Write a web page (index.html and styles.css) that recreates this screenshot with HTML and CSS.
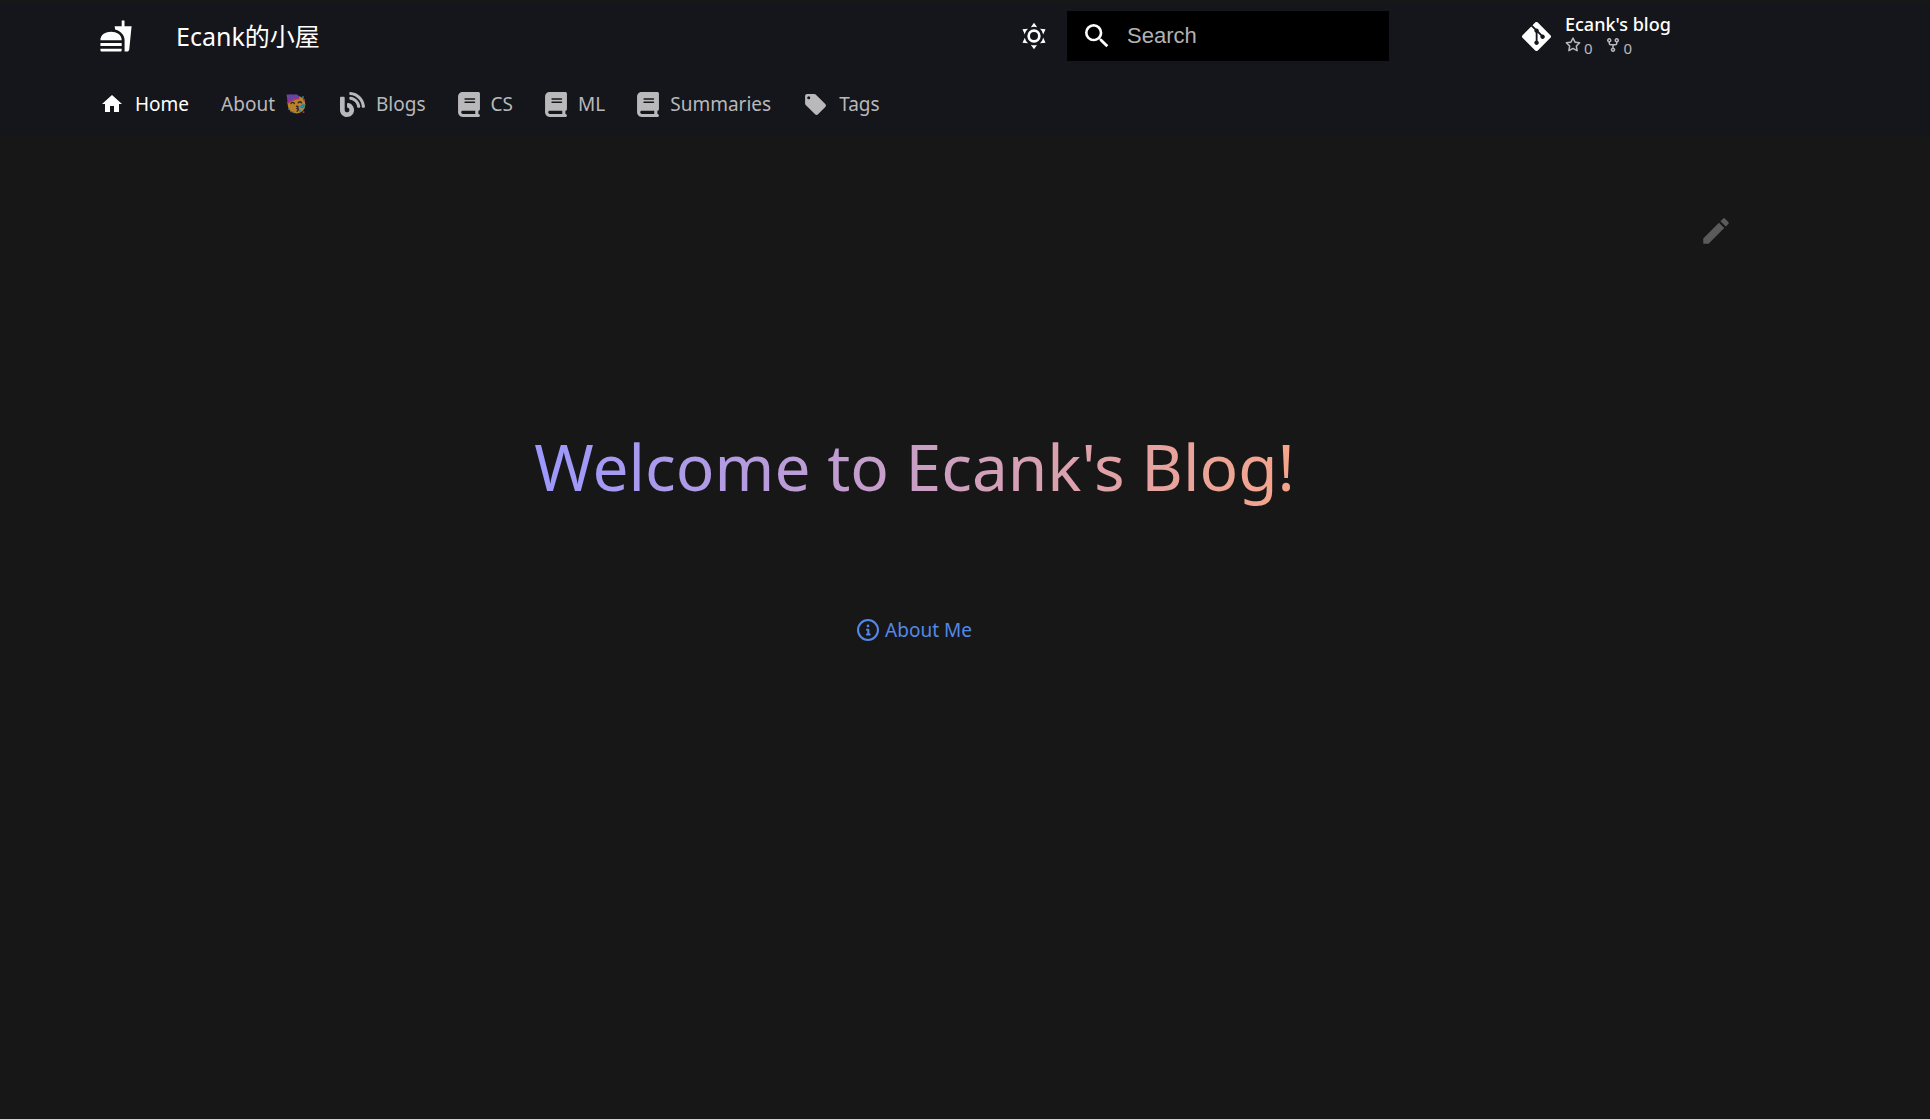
FILE: index.html
```html
<!DOCTYPE html>
<html lang="en">
<head>
<meta charset="utf-8">
<meta name="viewport" content="width=device-width, initial-scale=1">
<title>Ecank的小屋</title>
<link rel="stylesheet" href="styles.css">
</head>
<body>
<svg width="0" height="0" hidden>
  <symbol id="book" viewBox="0 0 448 512"><path d="M96 0C43 0 0 43 0 96v320c0 53 43 96 96 96h320c17.7 0 32-14.3 32-32s-14.3-32-32-32v-64c17.7 0 32-14.3 32-32V32c0-17.7-14.3-32-32-32zm0 384h256v64H96c-17.7 0-32-14.3-32-32s14.3-32 32-32m32-240c0-8.8 7.2-16 16-16h192c8.8 0 16 7.2 16 16s-7.2 16-16 16H144c-8.8 0-16-7.2-16-16m16 48h192c8.8 0 16 7.2 16 16s-7.2 16-16 16H144c-8.8 0-16-7.2-16-16s7.2-16 16-16"/></symbol>
</svg>
<header class="header">
  <div class="header-row">
    <a class="logo" href="#" aria-label="Ecank的小屋"><svg class="icon-34" viewBox="0 0 24 24"><path d="M18.06 22.99h1.66c.84 0 1.53-.64 1.63-1.46L23 5.05h-5V1h-1.97v4.05h-4.97l.3 2.34c1.71.47 3.31 1.32 4.27 2.26 1.44 1.42 2.43 2.89 2.43 5.29v8.05zM1 21.99V21h15.03v.99c0 .55-.45 1-1.01 1H2.01c-.56 0-1.01-.45-1.01-1zm15.03-7c0-8-15.03-8-15.03 0h15.03zM1.02 17h15v2h-15z"/></svg></a>
    <span class="site-title">Ecank的小屋</span>
    <button class="palette" type="button" aria-label="Switch color scheme"><svg class="icon-32" viewBox="0 0 24 24"><path d="M12 7a5 5 0 0 1 5 5 5 5 0 0 1-5 5 5 5 0 0 1-5-5 5 5 0 0 1 5-5m0 2a3 3 0 0 0-3 3 3 3 0 0 0 3 3 3 3 0 0 0 3-3 3 3 0 0 0-3-3m0-7 2.39 3.42C13.65 5.15 12.84 5 12 5s-1.65.15-2.39.42zM3.34 7l4.16-.35A7.2 7.2 0 0 0 5.94 8.5c-.44.74-.69 1.5-.83 2.29zm.02 10 1.76-3.77a7.131 7.131 0 0 0 2.38 4.14zM20.65 7l-1.77 3.79a7.02 7.02 0 0 0-2.38-4.15zm-.01 10-4.14.36c.59-.51 1.12-1.14 1.54-1.86.42-.73.69-1.5.83-2.29zM12 22l-2.41-3.44c.74.27 1.55.44 2.41.44.82 0 1.63-.17 2.37-.44z"/></svg></button>
    <form class="search" role="search">
      <label for="q" aria-label="Search"><svg class="icon-32" viewBox="0 0 24 24"><path d="M9.5 3A6.5 6.5 0 0 1 16 9.5c0 1.61-.59 3.09-1.56 4.23l.27.27h.79l5 5-1.5 1.5-5-5v-.79l-.27-.27A6.516 6.516 0 0 1 9.5 16 6.5 6.5 0 0 1 3 9.5 6.5 6.5 0 0 1 9.5 3m0 2C7 5 5 7 5 9.5S7 14 9.5 14 14 12 14 9.5 12 5 9.5 5z"/></svg></label>
      <input id="q" type="text" placeholder="Search">
    </form>
    <a class="repo" href="#">
      <svg class="repo-icon" viewBox="0 32 448 448"><path d="M439.55 236.05 244 40.45a28.87 28.87 0 0 0-40.81 0l-40.66 40.63 51.52 51.52c27.06-9.14 52.68 16.77 43.39 43.68l49.66 49.66c34.23-11.8 61.18 31 35.47 56.69-26.49 26.49-70.21-2.87-56-37.34L240.22 199v121.85c25.3 12.54 22.26 41.85 9.08 55a34.34 34.34 0 0 1-48.55 0c-17.57-17.6-11.07-46.91 11.25-56v-123c-20.8-8.51-24.6-30.74-18.64-45L142.57 101 8.45 235.14a28.86 28.86 0 0 0 0 40.81l195.61 195.6a28.86 28.86 0 0 0 40.8 0l194.69-194.69a28.86 28.86 0 0 0 0-40.81z"/></svg>
      <span class="repo-text">
        <span class="repo-name">Ecank's blog</span>
        <span class="facts">
          <span class="fact"><svg viewBox="0 0 16 16"><path d="M8 .25a.75.75 0 0 1 .673.418l1.882 3.815 4.21.612a.75.75 0 0 1 .416 1.279l-3.046 2.97.719 4.192a.751.751 0 0 1-1.088.791L8 12.347l-3.766 1.98a.75.75 0 0 1-1.088-.79l.72-4.194L.818 6.374a.75.75 0 0 1 .416-1.28l4.21-.611L7.327.668A.75.75 0 0 1 8 .25m0 2.445L6.615 5.5a.75.75 0 0 1-.564.41l-3.097.45 2.24 2.184a.75.75 0 0 1 .216.664l-.528 3.084 2.769-1.456a.75.75 0 0 1 .698 0l2.77 1.456-.53-3.084a.75.75 0 0 1 .216-.664l2.24-2.183-3.096-.45a.75.75 0 0 1-.564-.41z"/></svg><span>0</span></span>
          <span class="fact"><svg viewBox="0 0 16 16"><path d="M5 5.372v.878c0 .414.336.75.75.75h4.5a.75.75 0 0 0 .75-.75v-.878a2.25 2.25 0 1 1 1.5 0v.878a2.25 2.25 0 0 1-2.25 2.25h-1.5v2.128a2.251 2.251 0 1 1-1.5 0V8.5h-1.5A2.25 2.25 0 0 1 3.5 6.25v-.878a2.25 2.25 0 1 1 1.5 0M5 3.25a.75.75 0 1 0-1.5 0 .75.75 0 0 0 1.5 0m6.75.75a.75.75 0 1 0 0-1.5.75.75 0 0 0 0 1.5m-3 8.75a.75.75 0 1 0-1.5 0 .75.75 0 0 0 1.5 0"/></svg><span>0</span></span>
        </span>
      </span>
    </a>
  </div>
  <nav class="tabs" aria-label="Tabs">
    <a class="tab active" href="#"><svg class="icon-24" viewBox="0 0 24 24"><path d="M10 20v-6h4v6h5v-8h3L12 3 2 12h3v8z"/></svg>Home</a>
    <a class="tab" href="#">About
      <svg class="emoji" viewBox="0 0 36 36" aria-hidden="true">
        <circle cx="19" cy="19" r="16" fill="#ffb02e"/>
        <path d="M1 1h19q5 3 4 6L3 16z" fill="#9b4fd8"/>
        <path d="m8 1 5 10M17 1l4 7" stroke="#5a6cf0" stroke-width="3"/>
        <path d="M2 17q9-9 22-9" stroke="#e0409c" stroke-width="3" fill="none"/>
        <path d="M9 17q3-4 6 0M22 16q3-4 6 0M19 22q5 0 1 4 5 1 0 5" fill="none" stroke="#402a32" stroke-width="2.5" stroke-linecap="round"/>
        <path d="m24 23 6-5q5-1 4 4t-6 3z" fill="#26b8e8"/>
        <path d="M4 26h3v3H4zM29 4h3v3h-3zM12 31h3v3h-3zM24 29h3v3h-3z" fill="#26b8e8"/>
        <path d="M7 31h2v2H7zM31 9h3v3h-3zM30 31h3v3h-3z" fill="#f0408c"/>
      </svg></a>
    <a class="tab" href="#"><svg class="icon-25" viewBox="0 0 512 512"><path d="M172.2 226.8c-14.6-2.9-28.2 8.9-28.2 23.8V301c0 10.2 7.1 18.4 16.7 22 18.2 6.8 31.3 24.4 31.3 45 0 26.5-21.5 48-48 48s-48-21.5-48-48V120c0-13.3-10.7-24-24-24H24c-13.3 0-24 10.7-24 24v248c0 89.5 82.1 160.2 175 140.7 54.4-11.4 98.3-55.4 109.7-109.7 17.4-82.9-37-157.2-112.5-172.2zM209 0c-9.2-.5-17 6.8-17 16v31.6c0 8.5 6.6 15.5 15 15.9 129.4 7 233.4 112 240.9 241.5.5 8.4 7.5 15 15.9 15h32.1c9.2 0 16.5-7.8 16-17C503.4 139.8 372.2 8.6 209 0zm.3 96c-9.3-.7-17.3 6.7-17.3 16.1v32.1c0 8.4 6.5 15.3 14.8 15.9 76.8 6.3 138 68.2 144.9 145.2.8 8.3 7.6 14.7 15.9 14.7h32.2c9.3 0 16.8-8 16.1-17.3-8.4-110.1-96.5-198.2-206.6-206.7z"/></svg>Blogs</a>
    <a class="tab" href="#"><svg class="icon-book"><use href="#book"/></svg>CS</a>
    <a class="tab" href="#"><svg class="icon-book"><use href="#book"/></svg>ML</a>
    <a class="tab" href="#"><svg class="icon-book"><use href="#book"/></svg>Summaries</a>
    <a class="tab" href="#"><svg class="icon-25" viewBox="0 0 24 24"><path d="M5.5 7A1.5 1.5 0 0 1 4 5.5 1.5 1.5 0 0 1 5.5 4 1.5 1.5 0 0 1 7 5.5 1.5 1.5 0 0 1 5.5 7m15.91 4.58-9-9C12.05 2.22 11.55 2 11 2H4c-1.11 0-2 .89-2 2v7c0 .55.22 1.05.59 1.41l8.99 9c.37.36.87.59 1.42.59s1.05-.23 1.41-.59l7-7c.37-.36.59-.86.59-1.41 0-.56-.23-1.06-.59-1.42z"/></svg>Tags</a>
  </nav>
</header>
<main class="content">
  <a class="edit" href="#" aria-label="Edit this page"><svg class="icon-34" viewBox="0 0 24 24"><path d="M20.71 7.04c.39-.39.39-1.04 0-1.41l-2.34-2.34c-.37-.39-1.02-.39-1.41 0l-1.84 1.83 3.75 3.75M3 17.25V21h3.75L17.81 9.93l-3.75-3.75z"/></svg></a>
  <h1 class="welcome">Welcome to Ecank's Blog!</h1>
  <a class="about" href="#"><svg class="icon-22" viewBox="0 0 16 16"><path d="M0 8a8 8 0 1 1 16 0A8 8 0 0 1 0 8m8-6.5a6.5 6.5 0 1 0 0 13 6.5 6.5 0 0 0 0-13M6.5 7.75A.75.75 0 0 1 7.25 7h1a.75.75 0 0 1 .75.75v2.75h.25a.75.75 0 0 1 0 1.5h-2a.75.75 0 0 1 0-1.5h.25v-2h-.25a.75.75 0 0 1-.75-.75M8 6a1 1 0 1 1 0-2 1 1 0 0 1 0 2"/></svg>About Me</a>
</main>
</body>
</html>
```
FILE: styles.css
```css
* { box-sizing: border-box; }

body {
  margin: 0;
  min-height: 100vh;
  background: #171717;
  color: #fff;
  font-family: "Noto Sans", "Noto Sans CJK SC", sans-serif;
  font-size: 19px;
  line-height: 26px;
  border-top: 3px solid #171717;
}

a { color: inherit; text-decoration: none; }
svg { display: block; flex: none; fill: currentColor; }

.icon-22 { width: 22px; height: 22px; }
.icon-24 { width: 24px; height: 24px; }
.icon-25 { width: 25px; height: 25px; }
.icon-32 { width: 32px; height: 32px; }
.icon-34 { width: 34px; height: 34px; }
.icon-book { width: 22px; height: 25px; }

.header {
  padding: 0 96px;
  background: #15161b;
}

.header-row {
  display: flex;
  align-items: center;
  height: 66px;
}

.logo { padding: 0 3px; }

.site-title {
  flex: 1;
  margin-left: 40px;
  font-size: 25px;
  line-height: 34px;
  font-weight: 400;
}

.palette {
  margin: 0 17px 0 0;
  padding: 0;
  border: 0;
  background: none;
  color: #fff;
}

.search {
  display: flex;
  align-items: center;
  gap: 14px;
  width: 322px;
  height: 50px;
  padding: 0 14px;
  background: #000;
}

.search input {
  flex: 1;
  min-width: 0;
  padding: 0;
  border: 0;
  outline: 0;
  background: none;
  color: #fff;
  font: 22px "Liberation Sans", Arial, sans-serif;
}

.search input::placeholder { color: #b2b2b2; opacity: 1; }

.repo {
  display: flex;
  align-items: center;
  gap: 14px;
  width: 312px;
  margin-left: 133px;
}

.repo-icon { width: 29px; height: 29px; }
.repo-name { display: block; font-size: 18px; line-height: 24px; font-weight: 500; }

.facts {
  display: flex;
  gap: 12px;
  color: #b9b9bb;
  font-size: 15px;
  line-height: 24px;
}

.fact { display: flex; gap: 3px; }
.fact svg { width: 16px; height: 16px; margin-top: 1px; }

.tabs {
  display: flex;
  align-items: center;
  gap: 32px;
  height: 66px;
  padding: 4px 4px 0;
}

.tab {
  display: flex;
  align-items: center;
  gap: 11px;
  color: #b9b9bb;
}

.tab.active { color: #fff; }
.emoji { width: 20px; height: 20px; margin-right: 2px; opacity: .7; }

.content {
  display: flex;
  flex-direction: column;
  align-items: center;
  margin: 0 197px 0 96px;
  padding-top: 79px;
}

.edit { align-self: flex-end; color: #5a5a5a; }

.welcome {
  margin: 175px 0 0;
  background: linear-gradient(90deg, #9c98ff, #f6a58a);
  background-clip: text;
  -webkit-background-clip: text;
  color: transparent;
  font-size: 64px;
  line-height: 88px;
  font-weight: 400;
}

.about {
  display: flex;
  align-items: center;
  gap: 6px;
  margin-top: 106px;
  color: #5488e8;
}
```
